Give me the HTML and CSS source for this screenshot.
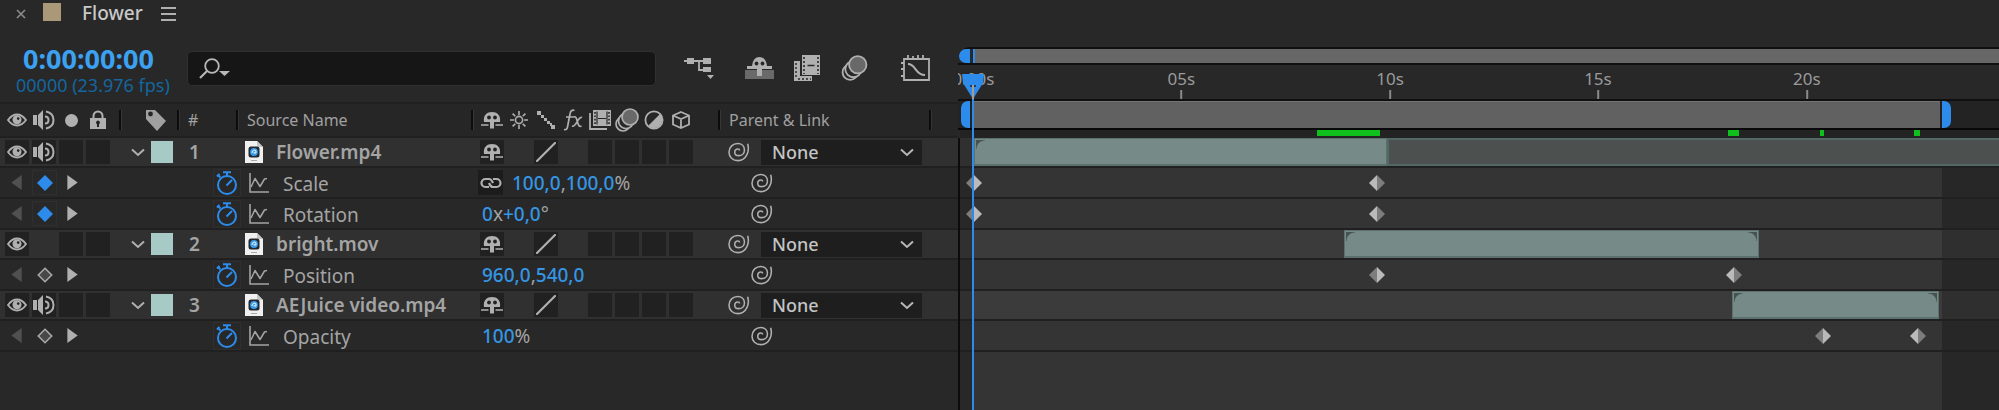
FILE: index.html
```html
<!DOCTYPE html>
<html lang="en">
<head>
    <meta charset="UTF-8">
    <meta name="viewport" content="width=device-width, initial-scale=1.0">
    <title>Flower</title>
    <link rel="stylesheet" href="styles.css">
</head>
<body>
    <!-- Icon set -->
    <svg class="sprite" aria-hidden="true">
        <symbol id="eye" viewBox="0 0 20 14">
            <path d="M1 7Q5 1.5 10 1.5T19 7Q15 12.5 10 12.5T1 7Z" fill="none" stroke="currentColor" stroke-width="1.8"/>
            <circle cx="10" cy="6.8" r="4.5" fill="currentColor"/>
            <circle cx="11.2" cy="5.6" r="1.3" fill="#222"/>
        </symbol>
        <symbol id="speaker" viewBox="0 0 22 20">
            <path d="M0 5h4v10H0zM5 5l5-5v20l-5-5z" fill="currentColor"/>
            <path d="M12 6.500q3.500 0 3.500 3.500T12 13.500M13 1.500q7.500 1.500 7.500 8.500T13 18.500" fill="none" stroke="currentColor" stroke-width="2"/>
        </symbol>
        <symbol id="lock" viewBox="0 0 18 20">
            <path d="M4.500 9V6a4.500 4.500 0 0 1 9 0v3" fill="none" stroke="currentColor" stroke-width="2"/>
            <path d="M1 8h16v11H1z" fill="currentColor"/>
            <path d="M9 10.500a2 2 0 0 0-1 3.700V17h2v-2.800a2 2 0 0 0-1-3.700z" fill="#222"/>
        </symbol>
        <symbol id="tag" viewBox="0 0 22 22">
            <path d="M1 1h9l11 11-9 10L1 10z" fill="currentColor"/>
            <circle cx="5.500" cy="5" r="2.400" fill="#262626"/>
        </symbol>
        <symbol id="shy" viewBox="0 0 22 18">
            <path d="M3 11C2 4 6 1 11 1s9 3 8 10h-6v6.500H9V11z" fill="currentColor"/>
            <circle cx="8" cy="6.500" r="1.900" fill="#222"/>
            <circle cx="14" cy="6.500" r="1.900" fill="#222"/>
            <path d="M0 14h7.500M14.500 14H22" stroke="currentColor" stroke-width="1.600"/>
        </symbol>
        <symbol id="sun" viewBox="0 0 18 18">
            <circle cx="9" cy="9" r="3.600" fill="none" stroke="currentColor" stroke-width="1.600"/>
            <path d="M9 0v4M9 14v4M0 9h4M14 9h4M2.600 2.600l2.700 2.700M12.700 12.700l2.700 2.700M2.600 15.400l2.700-2.700M12.700 5.300l2.700-2.700" stroke="currentColor" stroke-width="1.600"/>
        </symbol>
        <symbol id="collapse" viewBox="0 0 20 20">
            <path d="M1 1h4v4H1zM5 5h3v3H5zM8 8h3v3H8zM11 11h3v3h-3zM14 13h2v3h-2zM15 15h4v4h-4z" fill="currentColor"/>
        </symbol>
        <symbol id="fx" viewBox="0 0 20 22">
            <path d="M11.500 1.500C9 .5 7.500 2 7 5L4.500 18c-.5 2.500-1.500 3-3.500 2.500M3 8h7M10 8c3-1 3.500 1 4.500 5s2 5 4 4M19 8.500c-2-1-3 1-4.500 3.500s-3 6-5.500 5" fill="none" stroke="currentColor" stroke-width="1.700"/>
        </symbol>
        <symbol id="film" viewBox="0 0 22 20">
            <path d="M1 3v16h17" fill="none" stroke="currentColor" stroke-width="1.800"/>
            <path d="M4 0h18v16H4z" fill="currentColor"/>
            <path d="M6 2v12M20 2v12" stroke="#262626" stroke-width="1.600" stroke-dasharray="1.700 1.700"/>
            <path d="M8 1.500v13M18 1.500v13M9 8.500h8" stroke="#262626" stroke-width="1.200"/>
        </symbol>
        <symbol id="blur" viewBox="0 0 24 24">
            <g fill="#282828" stroke="currentColor" stroke-width="1.700">
                <circle cx="8" cy="16" r="7"/>
                <circle cx="11" cy="13" r="7.500"/>
                <circle cx="15" cy="9" r="8" fill="#696969"/>
            </g>
        </symbol>
        <symbol id="half" viewBox="0 0 20 20">
            <circle cx="10" cy="10" r="8.600" fill="none" stroke="currentColor" stroke-width="1.800"/>
            <path d="M16 4A8.500 8.500 0 0 1 4 16z" fill="currentColor"/>
        </symbol>
        <symbol id="cube" viewBox="0 0 18 18">
            <path d="M9 1l8 3.500v9L9 17l-8-3.500v-9zM1 4.500L9 8l8-3.500M9 8v9" fill="none" stroke="currentColor" stroke-width="1.800"/>
        </symbol>
        <symbol id="slash" viewBox="0 0 20 20">
            <path d="M1 19L19 1" stroke="currentColor" stroke-width="2.200" stroke-linecap="round"/>
        </symbol>
        <symbol id="chevron" viewBox="0 0 14 9">
            <path d="M1 1.500l6 5.500 6-5.500" fill="none" stroke="currentColor" stroke-width="2"/>
        </symbol>
        <symbol id="doc" viewBox="0 0 18 22">
            <path d="M0 0h12l6 6v16H0z" fill="#f0f0f0"/>
            <path d="M12 0l6 6h-6z" fill="#c4c4c4"/>
            <rect x="3.500" y="5.500" width="11" height="11" rx="2.500" fill="#22282e"/>
            <circle cx="9" cy="11" r="3.900" fill="#3c9be8"/>
            <path d="M7 12c0-3 4-4 4-1 0 1.500-2 1.500-2 0" fill="none" stroke="#c8ecff" stroke-width="1.200"/>
            <path d="M6 19.500h6" stroke="#aaa" stroke-width="1"/>
        </symbol>
        <symbol id="whip" viewBox="0 0 24 22">
            <path d="M21.500 2C24 10 20 20.500 11 20.500 5 20.500 1 16.500 1 11.200 1 5.500 5.500 1.700 10.500 1.700c4.500 0 7.500 3 7.500 7 0 4-3 6.300-6.300 6.300-2.700 0-4.400-1.600-4.400-3.800 0-2 1.400-3.700 3.700-3.500 1 0 1.600.7 1.600 1.600" fill="none" stroke="currentColor" stroke-width="1.700"/>
        </symbol>
        <symbol id="prev" viewBox="0 0 11 16"><path d="M0 8L11 0v16z" fill="currentColor"/></symbol>
        <symbol id="next" viewBox="0 0 11 16"><path d="M11 8L0 0v16z" fill="currentColor"/></symbol>
        <symbol id="key-on" viewBox="0 0 16 16"><path d="M8 0l8 8-8 8-8-8z" fill="#2d8ceb"/></symbol>
        <symbol id="key-off" viewBox="0 0 16 16"><path d="M8 1.300L14.700 8 8 14.700 1.300 8z" fill="#484848" stroke="#a8a8a8" stroke-width="1.600"/></symbol>
        <symbol id="key-in" viewBox="0 0 16 16"><path d="M8 0v16L0 8z" fill="#7d7d7d"/><path d="M8 0l8 8-8 8z" fill="#bababa"/></symbol>
        <symbol id="key-out" viewBox="0 0 16 16"><path d="M8 0v16L0 8z" fill="#bababa"/><path d="M8 0l8 8-8 8z" fill="#7d7d7d"/></symbol>
        <symbol id="watch" viewBox="0 0 22 24">
            <circle cx="11" cy="14" r="9" fill="none" stroke="currentColor" stroke-width="2"/>
            <path d="M7 1.200h8M11 1v4M1.500 3.500l3 3M3.500 3L1 5.500M10.500 14.500L16 9" stroke="currentColor" stroke-width="2"/>
        </symbol>
        <symbol id="graph" viewBox="0 0 20 20">
            <path d="M1 0v19h19" fill="none" stroke="currentColor" stroke-width="1.600"/>
            <path d="M2 14L6 5.500 11 13.500 15.500 6 18 5.500" fill="none" stroke="currentColor" stroke-width="1.500" stroke-linejoin="round"/>
        </symbol>
        <symbol id="chain" viewBox="0 0 22 12">
            <path d="M9 10H5.500A4 4 0 0 1 5.500 2H9q2.500 0 4 4M13 2h3.500a4 4 0 0 1 0 8H13q-2.500 0-4-4" fill="none" stroke="currentColor" stroke-width="2.200"/>
        </symbol>
    </svg>

    <main class="panel">
        <section class="outline">
            <header class="tab-bar">
                <button class="close" aria-label="Close tab"><svg width="10" height="10" viewBox="0 0 10 10"><path d="M1 1l8 8M9 1L1 9" stroke="currentColor" stroke-width="1.600"/></svg></button>
                <span class="comp-color"></span>
                <h1 class="comp-name">Flower</h1>
                <button class="menu" aria-label="Panel menu"><svg width="15" height="14" viewBox="0 0 15 14"><path d="M0 1h15M0 7h15M0 13h15" stroke="currentColor" stroke-width="1.800"/></svg></button>
            </header>

            <div class="tools">
                <div class="time">
                    <strong class="timecode">0:00:00:00</strong>
                    <span class="frames">00000 (23.976 fps)</span>
                </div>
                <div class="search">
                    <svg width="32" height="22" viewBox="0 0 32 22">
                        <circle cx="13" cy="8" r="6.800" fill="none" stroke="currentColor" stroke-width="1.800"/>
                        <path d="M8 13l-7 7" stroke="currentColor" stroke-width="2.200"/>
                        <path d="M20 13h11l-5.500 5z" fill="currentColor"/>
                    </svg>
                    <input type="text" aria-label="Search layers">
                </div>
                <div class="tool-icons">
                    <button aria-label="Mini-flowchart">
                        <svg width="30" height="24" viewBox="0 0 30 24">
                            <path d="M0 5h20M15 5v9h6" fill="none" stroke="currentColor" stroke-width="1.800"/>
                            <path d="M3 2h7v6H3zM19 2h8v6h-8zM19 11h8v5h-8zM23 19h7l-3.500 4z" fill="currentColor"/>
                        </svg>
                    </button>
                    <button aria-label="Hide shy layers">
                        <svg width="30" height="24" viewBox="0 0 30 24">
                            <path d="M0 14h29v9H0z" fill="#6a6a6a"/>
                            <path d="M2 10h5Q8 1 14.500 1T22 10h5v3H17v7h-5v-7H2z" fill="currentColor"/>
                            <circle cx="11.500" cy="7.500" r="1.900" fill="#282828"/>
                            <circle cx="17.500" cy="7.500" r="1.900" fill="#282828"/>
                        </svg>
                    </button>
                    <button aria-label="Frame blending">
                        <svg width="26" height="26" viewBox="0 0 26 26">
                            <path d="M0 6h6v15h12v5H0z" fill="currentColor"/>
                            <path d="M2 8v16M4 24h13" stroke="#282828" stroke-width="1.400" stroke-dasharray="2 2" fill="none"/>
                            <path d="M8 0h18v20H8z" fill="currentColor"/>
                            <path d="M10 2v17M24 2v17" stroke="#282828" stroke-width="1.600" stroke-dasharray="2 2"/>
                            <path d="M13.500 10.500h7" stroke="#282828" stroke-width="1.500"/>
                        </svg>
                    </button>
                    <button aria-label="Motion blur"><svg width="27" height="26"><use href="#blur"/></svg></button>
                    <button aria-label="Graph editor">
                        <svg width="30" height="28" viewBox="0 0 30 28">
                            <path d="M3 5h25v21H3zM7 5V1M12 5V2M17 5V1M22 5V1M3 9H0M3 15H0M3 22H0" fill="none" stroke="currentColor" stroke-width="1.800"/>
                            <path d="M7 10c8 0 7 11 17 11" fill="none" stroke="currentColor" stroke-width="2"/>
                        </svg>
                    </button>
                </div>
            </div>

            <div class="columns">
                <div class="cells">
                    <span class="icon"><svg width="20" height="14"><use href="#eye"/></svg></span>
                    <span class="icon"><svg width="22" height="20"><use href="#speaker"/></svg></span>
                    <span class="icon"><i class="dot"></i></span>
                    <span class="icon"><svg width="18" height="20"><use href="#lock"/></svg></span>
                </div>
                <div class="col-label"><svg width="22" height="22"><use href="#tag"/></svg></div>
                <div class="col-num">#</div>
                <div class="col-source">Source Name</div>
                <div class="cells switches">
                    <span class="icon"><svg width="22" height="18"><use href="#shy"/></svg></span>
                    <span class="icon"><svg width="18" height="18"><use href="#sun"/></svg></span>
                    <span class="icon"><svg width="20" height="20"><use href="#collapse"/></svg></span>
                    <span class="icon"><svg width="20" height="22"><use href="#fx"/></svg></span>
                    <span class="icon"><svg width="22" height="20"><use href="#film"/></svg></span>
                    <span class="icon"><svg width="24" height="24"><use href="#blur"/></svg></span>
                    <span class="icon"><svg width="20" height="20"><use href="#half"/></svg></span>
                    <span class="icon"><svg width="18" height="18"><use href="#cube"/></svg></span>
                </div>
                <div class="col-parent">Parent &amp; Link</div>
                <div class="col-rest"></div>
            </div>

            <!-- Layer 1 -->
            <div class="layer">
                <div class="cells">
                    <button class="icon box" aria-label="Video"><svg width="20" height="14"><use href="#eye"/></svg></button>
                    <button class="icon box" aria-label="Audio"><svg width="22" height="20"><use href="#speaker"/></svg></button>
                    <button class="icon box" aria-label="Solo"></button>
                    <button class="icon box" aria-label="Lock"></button>
                </div>
                <div class="label">
                    <button aria-label="Collapse layer"><svg width="14" height="9"><use href="#chevron"/></svg></button>
                    <span class="swatch"></span>
                </div>
                <div class="num">1</div>
                <div class="source"><svg width="18" height="22"><use href="#doc"/></svg>Flower.mp4</div>
                <div class="cells switches">
                    <button class="icon box" aria-label="Shy"><svg width="22" height="18"><use href="#shy"/></svg></button>
                    <span class="icon"></span>
                    <button class="icon box" aria-label="Quality"><svg width="20" height="20"><use href="#slash"/></svg></button>
                    <span class="icon"></span>
                    <button class="icon box" aria-label="Frame blend"></button>
                    <button class="icon box" aria-label="Motion blur"></button>
                    <button class="icon box" aria-label="Adjustment layer"></button>
                    <button class="icon box" aria-label="3D layer"></button>
                </div>
                <div class="parent">
                    <button aria-label="Parent pick whip"><svg width="22" height="20"><use href="#whip"/></svg></button>
                    <div class="select">
                        <select aria-label="Parent of layer 1"><option>None</option></select>
                        <svg width="14" height="9"><use href="#chevron"/></svg>
                    </div>
                </div>
            </div>
            <div class="prop">
                <div class="key-nav">
                    <button class="off" aria-label="Previous keyframe"><svg width="11" height="15"><use href="#prev"/></svg></button>
                    <button class="key framed" aria-label="Keyframe"><svg width="16" height="16"><use href="#key-on"/></svg></button>
                    <button aria-label="Next keyframe"><svg width="11" height="15"><use href="#next"/></svg></button>
                </div>
                <button class="watch" aria-label="Animate Scale"><svg width="22" height="24"><use href="#watch"/></svg></button>
                <div class="prop-name"><svg width="20" height="20"><use href="#graph"/></svg><span>Scale</span></div>
                <div class="value linked">
                    <button class="chain" aria-label="Constrain proportions"><svg width="22" height="12"><use href="#chain"/></svg></button>
                    <span><b>100,0</b>,<b>100,0</b>%</span>
                </div>
                <button class="whip" aria-label="Scale pick whip"><svg width="22" height="20"><use href="#whip"/></svg></button>
            </div>
            <div class="prop">
                <div class="key-nav">
                    <button class="off" aria-label="Previous keyframe"><svg width="11" height="15"><use href="#prev"/></svg></button>
                    <button class="key framed" aria-label="Keyframe"><svg width="16" height="16"><use href="#key-on"/></svg></button>
                    <button aria-label="Next keyframe"><svg width="11" height="15"><use href="#next"/></svg></button>
                </div>
                <button class="watch" aria-label="Animate Rotation"><svg width="22" height="24"><use href="#watch"/></svg></button>
                <div class="prop-name"><svg width="20" height="20"><use href="#graph"/></svg><span>Rotation</span></div>
                <div class="value"><span><b>0</b>x<b>+0,0</b>°</span></div>
                <button class="whip" aria-label="Rotation pick whip"><svg width="22" height="20"><use href="#whip"/></svg></button>
            </div>

            <!-- Layer 2 -->
            <div class="layer">
                <div class="cells">
                    <button class="icon box" aria-label="Video"><svg width="20" height="14"><use href="#eye"/></svg></button>
                    <span class="icon"></span>
                    <button class="icon box" aria-label="Solo"></button>
                    <button class="icon box" aria-label="Lock"></button>
                </div>
                <div class="label">
                    <button aria-label="Collapse layer"><svg width="14" height="9"><use href="#chevron"/></svg></button>
                    <span class="swatch"></span>
                </div>
                <div class="num">2</div>
                <div class="source"><svg width="18" height="22"><use href="#doc"/></svg>bright.mov</div>
                <div class="cells switches">
                    <button class="icon box" aria-label="Shy"><svg width="22" height="18"><use href="#shy"/></svg></button>
                    <span class="icon"></span>
                    <button class="icon box" aria-label="Quality"><svg width="20" height="20"><use href="#slash"/></svg></button>
                    <span class="icon"></span>
                    <button class="icon box" aria-label="Frame blend"></button>
                    <button class="icon box" aria-label="Motion blur"></button>
                    <button class="icon box" aria-label="Adjustment layer"></button>
                    <button class="icon box" aria-label="3D layer"></button>
                </div>
                <div class="parent">
                    <button aria-label="Parent pick whip"><svg width="22" height="20"><use href="#whip"/></svg></button>
                    <div class="select">
                        <select aria-label="Parent of layer 2"><option>None</option></select>
                        <svg width="14" height="9"><use href="#chevron"/></svg>
                    </div>
                </div>
            </div>
            <div class="prop">
                <div class="key-nav">
                    <button class="off" aria-label="Previous keyframe"><svg width="11" height="15"><use href="#prev"/></svg></button>
                    <button class="key" aria-label="Keyframe"><svg width="16" height="16"><use href="#key-off"/></svg></button>
                    <button aria-label="Next keyframe"><svg width="11" height="15"><use href="#next"/></svg></button>
                </div>
                <button class="watch" aria-label="Animate Position"><svg width="22" height="24"><use href="#watch"/></svg></button>
                <div class="prop-name"><svg width="20" height="20"><use href="#graph"/></svg><span>Position</span></div>
                <div class="value"><span><b>960,0</b>,<b>540,0</b></span></div>
                <button class="whip" aria-label="Position pick whip"><svg width="22" height="20"><use href="#whip"/></svg></button>
            </div>

            <!-- Layer 3 -->
            <div class="layer">
                <div class="cells">
                    <button class="icon box" aria-label="Video"><svg width="20" height="14"><use href="#eye"/></svg></button>
                    <button class="icon box" aria-label="Audio"><svg width="22" height="20"><use href="#speaker"/></svg></button>
                    <button class="icon box" aria-label="Solo"></button>
                    <button class="icon box" aria-label="Lock"></button>
                </div>
                <div class="label">
                    <button aria-label="Collapse layer"><svg width="14" height="9"><use href="#chevron"/></svg></button>
                    <span class="swatch"></span>
                </div>
                <div class="num">3</div>
                <div class="source"><svg width="18" height="22"><use href="#doc"/></svg>AEJuice video.mp4</div>
                <div class="cells switches">
                    <button class="icon box" aria-label="Shy"><svg width="22" height="18"><use href="#shy"/></svg></button>
                    <span class="icon"></span>
                    <button class="icon box" aria-label="Quality"><svg width="20" height="20"><use href="#slash"/></svg></button>
                    <span class="icon"></span>
                    <button class="icon box" aria-label="Frame blend"></button>
                    <button class="icon box" aria-label="Motion blur"></button>
                    <button class="icon box" aria-label="Adjustment layer"></button>
                    <button class="icon box" aria-label="3D layer"></button>
                </div>
                <div class="parent">
                    <button aria-label="Parent pick whip"><svg width="22" height="20"><use href="#whip"/></svg></button>
                    <div class="select">
                        <select aria-label="Parent of layer 3"><option>None</option></select>
                        <svg width="14" height="9"><use href="#chevron"/></svg>
                    </div>
                </div>
            </div>
            <div class="prop">
                <div class="key-nav">
                    <button class="off" aria-label="Previous keyframe"><svg width="11" height="15"><use href="#prev"/></svg></button>
                    <button class="key" aria-label="Keyframe"><svg width="16" height="16"><use href="#key-off"/></svg></button>
                    <button aria-label="Next keyframe"><svg width="11" height="15"><use href="#next"/></svg></button>
                </div>
                <button class="watch" aria-label="Animate Opacity"><svg width="22" height="24"><use href="#watch"/></svg></button>
                <div class="prop-name"><svg width="20" height="20"><use href="#graph"/></svg><span>Opacity</span></div>
                <div class="value"><span><b>100</b>%</span></div>
                <button class="whip" aria-label="Opacity pick whip"><svg width="22" height="20"><use href="#whip"/></svg></button>
            </div>
        </section>

        <section class="timeline">
            <div class="navigator">
                <span class="nav-handle"></span>
                <span class="nav-bar"></span>
            </div>
            <div class="ruler">
                <span class="mark" style="left: 1.3%">0:00s</span>
                <span class="mark" style="left: 21.3%">05s</span>
                <span class="mark" style="left: 41.4%">10s</span>
                <span class="mark" style="left: 61.4%">15s</span>
                <span class="mark" style="left: 81.5%">20s</span>
            </div>
            <div class="work-area">
                <span class="work-handle start"></span>
                <span class="work-bar"></span>
                <span class="work-handle end"></span>
            </div>
            <div class="cache">
                <span style="left: 34.4%; width: 6%"></span>
                <span style="left: 73.9%; width: 1.1%"></span>
                <span style="left: 82.8%; width: 0.4%"></span>
                <span style="left: 91.8%; width: 0.6%"></span>
            </div>

            <div class="tracks">
                <div class="track layer-track">
                    <span class="clip rest" style="left: 41.1%; width: 58.9%"></span>
                    <span class="clip fade-in" style="left: 1.3%; width: 39.8%"></span>
                </div>
                <div class="track">
                    <svg class="keyframe" style="left: 1.3%"><use href="#key-in"/></svg>
                    <svg class="keyframe" style="left: 40.1%"><use href="#key-out"/></svg>
                </div>
                <div class="track">
                    <svg class="keyframe" style="left: 1.3%"><use href="#key-in"/></svg>
                    <svg class="keyframe" style="left: 40.1%"><use href="#key-out"/></svg>
                </div>
                <div class="track layer-track">
                    <span class="clip fade-in fade-out" style="left: 37%; width: 39.9%"></span>
                </div>
                <div class="track">
                    <svg class="keyframe" style="left: 40.1%"><use href="#key-in"/></svg>
                    <svg class="keyframe" style="left: 74.5%"><use href="#key-out"/></svg>
                </div>
                <div class="track layer-track">
                    <span class="clip fade-in fade-out" style="left: 74.3%; width: 19.9%"></span>
                </div>
                <div class="track">
                    <svg class="keyframe" style="left: 83.1%"><use href="#key-in"/></svg>
                    <svg class="keyframe" style="left: 92.2%"><use href="#key-out"/></svg>
                </div>
            </div>

            <div class="playhead">
                <svg width="22" height="26" viewBox="0 0 22 26">
                    <path d="M0 0h22l-1 9-10 16L1 9z" fill="#2d8ceb"/>
                    <path d="M8 12h2M12 12h2" stroke="#1c3c5c" stroke-width="2"/>
                    <path d="M11 11v14" stroke="#a39b94" stroke-width="2"/>
                </svg>
            </div>
        </section>
    </main>
</body>
</html>
```
FILE: styles.css
```css
* {
    box-sizing: border-box;
}
body {
    margin: 0;
    background-color: #282828;
    color: #a4a4a4;
    font-family: "Noto Sans", "Open Sans", sans-serif;
    font-size: 18px;
    overflow: hidden;
}
button {
    display: flex;
    align-items: center;
    justify-content: center;
    margin: 0;
    padding: 0;
    border: none;
    background: none;
    color: #b0b0b0;
    cursor: pointer;
}
svg {
    display: block;
    flex: none;
}
.sprite {
    position: absolute;
    width: 0;
    height: 0;
}
.panel {
    display: grid;
    grid-template-columns: 958px 1fr;
    min-height: 100vh;
}

/* Tab and tools */
.tab-bar {
    display: flex;
    align-items: center;
    height: 27px;
    padding-left: 16px;
}
.close {
    color: #8c8c8c;
}
.comp-color {
    width: 18px;
    height: 18px;
    margin: 0 21px 4px 17px;
    background-color: #ab9878;
}
.comp-name {
    margin: 0 18px 2px 0;
    color: #c8c8c8;
    font-size: 19px;
    font-weight: 500;
    line-height: 24px;
}
.tools {
    display: flex;
    align-items: flex-start;
    height: 75px;
    padding-left: 16px;
}
.time {
    display: flex;
    flex-direction: column;
    width: 171px;
    padding-top: 18px;
}
.timecode {
    padding-left: 7px;
    color: #3ba1f0;
    font-size: 27px;
    line-height: 28px;
}
.frames {
    color: #14669f;
    font-size: 18px;
    line-height: 24px;
    white-space: nowrap;
}
.search {
    display: flex;
    align-items: center;
    width: 469px;
    height: 35px;
    margin-top: 24px;
    padding: 0 11px;
    border: 1px solid #303030;
    border-radius: 5px;
    background-color: #161616;
    color: #b8b8b8;
}
.search input {
    flex: 1;
    border: none;
    outline: none;
    background: none;
    color: #c8c8c8;
    font: inherit;
}
.tool-icons {
    display: flex;
    align-items: center;
    margin: 27px 0 0 28px;
}
.tool-icons button {
    width: 30px;
    margin-right: 17px;
}
.tool-icons button:first-child {
    margin-right: 31px;
}
.tool-icons button:nth-child(4) {
    margin-right: 32px;
}

/* Column layout shared by the header and the layer rows */
.columns,
.layer {
    display: grid;
    grid-template-columns: 119px 58px 59px 235px 247px 211px 1fr;
    align-items: center;
}
.columns {
    height: 36px;
    border-top: 2px solid #202020;
    border-bottom: 2px solid #202020;
    background-color: #262626;
    color: #a0a0a0;
    font-size: 16px;
}
.columns > div {
    display: flex;
    align-items: center;
    height: 20px;
    border-left: 2px solid #0c0c0c;
    box-shadow: inset 1px 0 #363636;
}
.columns > div:first-child {
    border-left: none;
    box-shadow: none;
}
.columns > .col-label {
    padding-left: 24px;
}
.columns > .col-num,
.columns > .col-source,
.columns > .col-parent {
    padding-left: 9px;
}
.cells {
    display: flex;
    align-items: center;
    gap: 3px;
    padding-left: 5px;
}
.cells.switches {
    padding-left: 9px;
}
.columns > .switches {
    padding-left: 7px;
}
.icon {
    display: flex;
    align-items: center;
    justify-content: center;
    flex: none;
    width: 24px;
    height: 24px;
    color: #b0b0b0;
}
.box {
    background-color: #212121;
}
.dot {
    width: 13px;
    height: 13px;
    border-radius: 50%;
    background-color: #b0b0b0;
}

/* Layer rows */
.layer {
    height: 30px;
    border-bottom: 2px solid #202020;
    background-color: #303030;
}
.label {
    display: flex;
    align-items: center;
    gap: 6px;
    padding-left: 12px;
}
.swatch {
    width: 22px;
    height: 22px;
    background-color: #a8cac7;
}
.num {
    padding-left: 12px;
    font-size: 19px;
    font-weight: 600;
    line-height: 26px;
}
.source {
    display: flex;
    align-items: center;
    gap: 13px;
    padding-left: 9px;
    font-size: 19px;
    font-weight: 600;
    line-height: 26px;
    white-space: nowrap;
}
.parent {
    display: flex;
    align-items: center;
    gap: 11px;
    padding-left: 10px;
}
.select {
    position: relative;
    width: 161px;
    height: 25px;
}
.select select {
    width: 100%;
    height: 100%;
    padding: 0 11px;
    border: none;
    border-radius: 0;
    appearance: none;
    background-color: #1e1e1e;
    color: #c4c4c4;
    font: inherit;
    font-weight: 500;
    line-height: 25px;
}
.select svg {
    position: absolute;
    top: 8px;
    right: 8px;
    color: #b8b8b8;
    pointer-events: none;
}

/* Property rows */
.prop {
    display: grid;
    grid-template-columns: 213px 28px 230px 247px 1fr;
    align-items: center;
    height: 31px;
    border-bottom: 2px solid #202020;
    font-size: 19px;
}
.key-nav {
    display: flex;
    align-items: center;
    gap: 10px;
    padding-left: 11px;
}
.key-nav .off {
    color: #505050;
}
.key {
    width: 25px;
    height: 25px;
}
.framed {
    border: 1px solid #2f2f2f;
}
.watch {
    height: 28px;
    border: 1px solid #2f2f2f;
    color: #2d8ceb;
}
.prop-name {
    display: flex;
    align-items: center;
    gap: 14px;
    padding-left: 8px;
    line-height: 24px;
}
.prop-name span {
    padding-top: 3px;
}
.value {
    display: flex;
    align-items: center;
    gap: 9px;
    padding-left: 11px;
    line-height: 26px;
    white-space: nowrap;
}
.value.linked {
    padding-left: 7px;
}
.value b {
    color: #3496e4;
    font-weight: 500;
}
.chain {
    width: 25px;
    height: 25px;
    background-color: #1c1c1c;
}
.whip {
    justify-content: flex-start;
    padding-left: 33px;
}

/* Timeline */
.timeline {
    position: relative;
    display: flex;
    flex-direction: column;
    margin-top: 47px;
    overflow: hidden;
    border-top-left-radius: 12px;
}
.navigator {
    display: flex;
    gap: 3px;
    height: 18px;
    padding-left: 1px;
    border-top: 2px solid #101010;
    border-bottom: 2px solid #101010;
}
.nav-handle {
    width: 11px;
    border-radius: 7px 0 0 7px;
    background-color: #2d8ceb;
}
.nav-bar {
    flex: 1;
    border-left: 2px solid #2d8ceb;
    background-color: #676767;
}
.ruler {
    position: relative;
    height: 34px;
    margin-left: 2px;
}
.mark {
    position: absolute;
    top: 4px;
    color: #9a9a9a;
    font-size: 17px;
    line-height: 20px;
    transform: translateX(-50%);
}
.mark::after {
    content: "";
    display: block;
    width: 2px;
    height: 9px;
    margin: 1px auto 0;
    background-color: #8a8a8a;
}
.work-area {
    display: flex;
    gap: 2px;
    height: 31px;
    padding-left: 3px;
    border-top: 2px solid #101010;
    border-bottom: 2px solid #080808;
    background-color: #232323;
}
.work-handle {
    width: 9px;
    background-color: #2d8ceb;
}
.work-handle.start {
    border-radius: 7px 0 0 7px;
}
.work-handle.end {
    border-radius: 0 7px 7px 0;
}
.work-bar {
    width: 93.3%;
    border-top: 1px solid #747474;
    background-color: #616161;
}
.cache {
    position: relative;
    height: 8px;
    margin-left: 2px;
    background-color: #232323;
}
.cache span {
    position: absolute;
    top: 0;
    height: 6px;
    background-color: #10c01c;
}
.tracks {
    flex: 1;
    border-left: 2px solid #0c0c0c;
    background: linear-gradient(90deg, #282828 1.3%, #343434 1.3%, #343434 94.5%, #272727 94.5%) padding-box;
}
.track {
    position: relative;
    height: 31px;
    border-bottom: 2px solid #202020;
}
.layer-track {
    height: 30px;
    background-color: rgba(255, 255, 255, 0.04);
}
.clip {
    position: absolute;
    top: 0;
    bottom: 0;
    border: solid #5c716d;
    border-width: 1px 1px 2px 1px;
    background-color: #768a87;
}
.clip.rest {
    border: 2px solid #526864;
    border-right: none;
    background-color: #4c504e;
}
.fade-in::before,
.fade-out::after {
    content: "";
    position: absolute;
    top: 1px;
    width: 9px;
    height: 9px;
}
.fade-in::before {
    left: 1px;
    background: radial-gradient(circle at 100% 100%, transparent 8px, #45524f 9px);
}
.fade-out::after {
    right: 1px;
    background: radial-gradient(circle at 0 100%, transparent 8px, #45524f 9px);
}
.keyframe {
    position: absolute;
    top: 7px;
    width: 16px;
    height: 16px;
    margin-left: -8px;
}
.playhead {
    position: absolute;
    top: 27px;
    bottom: 0;
    left: 14px;
    width: 2px;
    background: linear-gradient(transparent 24px, #2d8ceb 24px);
}
.playhead svg {
    margin-left: -10px;
}
```
